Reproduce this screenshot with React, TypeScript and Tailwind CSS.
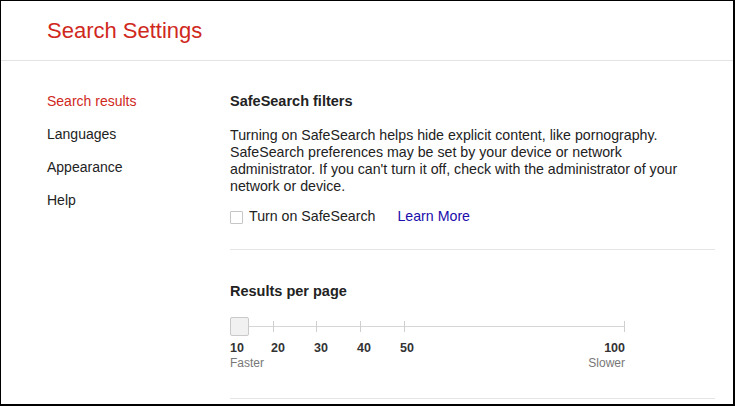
const navItems = ["Search results", "Languages", "Appearance", "Help"];

const ticks = [
  { value: "10", tick: null, label: 0 },
  { value: "20", tick: 43, label: 41 },
  { value: "30", tick: 86, label: 84 },
  { value: "40", tick: 130, label: 127 },
  { value: "50", tick: 174, label: 170 },
];

function ResultsSlider() {
  return (
    <div className="w-[395px]">
      <div className="relative h-[20px]">
        <div className="absolute left-[19px] right-0 top-[9px] h-px bg-[#d6d6d6]" />
        {ticks
          .filter((t) => t.tick !== null)
          .map((t) => (
            <div
              key={t.value}
              className="absolute top-[4px] h-[11px] w-px bg-[#cfcfcf]"
              style={{ left: t.tick as number }}
            />
          ))}
        <div className="absolute right-0 top-[4px] h-[11px] w-px bg-[#cfcfcf]" />
        <div className="absolute left-0 top-0 h-[19px] w-[19px] rounded-[2px] border border-[#c9c9c9] bg-[#f1f1f1]" />
      </div>
      <div className="relative mt-[4px] h-[14px] text-[12.5px] font-bold leading-[14px] text-[#333]">
        {ticks.map((t) => (
          <span key={t.value} className="absolute top-0" style={{ left: t.label }}>
            {t.value}
          </span>
        ))}
        <span className="absolute right-0 top-0">100</span>
      </div>
      <div className="flex justify-between text-[12px] leading-[16px] text-[#777]">
        <span>Faster</span>
        <span>Slower</span>
      </div>
    </div>
  );
}

export default function App() {
  return (
    <div className="h-[406px] w-[735px] overflow-hidden border-t border-l border-r-2 border-b-2 border-black bg-white font-['Liberation_Sans',Arial,sans-serif] text-[#222]">
      <div className="flex h-[60px] items-center border-b border-[#e3e3e3] pl-[46px]">
        <h1 className="pt-[1px] text-[22px] leading-[26px] text-[#d0281c]">Search Settings</h1>
      </div>

      <div className="flex">
        <ul className="w-[229px] shrink-0 pl-[46px] pt-[24px] text-[14px] leading-[33px]">
          {navItems.map((item, i) => (
            <li key={item} className={i === 0 ? "text-[#d0281c]" : "text-[#222]"}>
              {item}
            </li>
          ))}
        </ul>

        <div className="w-[485px] pt-[30px]">
          <h2 className="text-[14.5px] font-bold leading-[20px]">SafeSearch filters</h2>
          <p className="mt-[16px] pr-[24px] text-[14.2px] leading-[17px]">
            Turning on SafeSearch helps hide explicit content, like pornography. SafeSearch preferences may be set by
            your device or network administrator. If you can't turn it off, check with the administrator of your
            network or device.
          </p>
          <div className="mt-[12px] flex h-[20px] items-center text-[14.2px]">
            <span className="h-[13px] w-[13px] rounded-[1px] border border-[#c6c6c6] bg-white" />
            <span className="ml-[6px]">Turn on SafeSearch</span>
            <span className="ml-[22px] text-[#1a0dab]">Learn More</span>
          </div>

          <div className="mt-[22px] h-px bg-[#e5e5e5]" />

          <h2 className="mt-[31px] text-[14.5px] font-bold leading-[20px]">Results per page</h2>
          <div className="mt-[16px]">
            <ResultsSlider />
          </div>

          <div className="mt-[27px] h-px bg-[#e5e5e5]" />
        </div>
      </div>
    </div>
  );
}
